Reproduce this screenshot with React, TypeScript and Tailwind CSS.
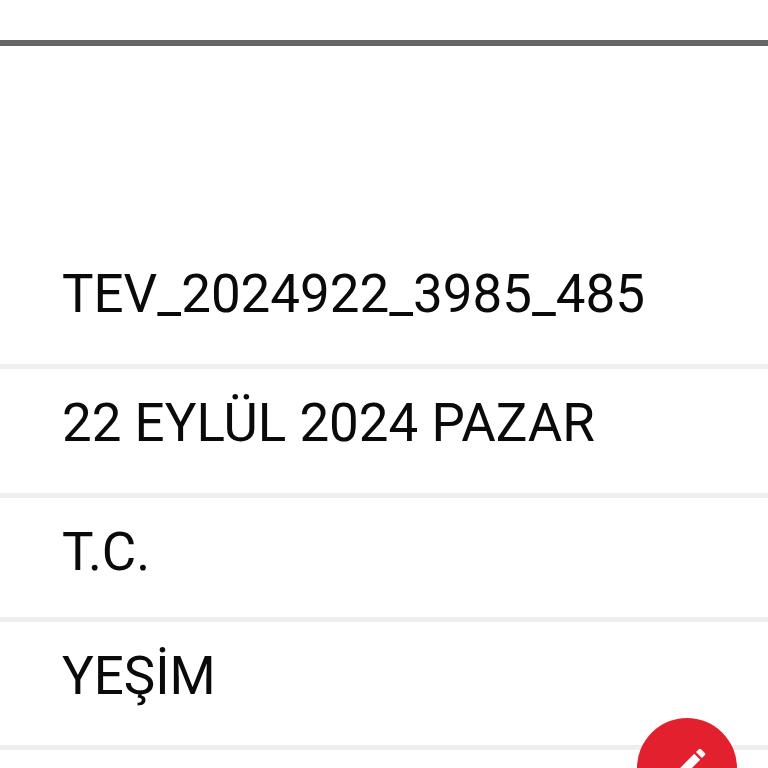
const rows = [
  { label: 'TEV_2024922_3985_485', h: 'h-[129px]' },
  { label: '22 EYLÜL 2024 PAZAR', h: 'h-[129px]' },
  { label: 'T.C.', h: 'h-[124px]' },
  { label: 'YEŞİM', h: 'h-[128px]' },
];

export default function App() {
  return (
    <div className="relative h-[768px] w-[768px] overflow-hidden bg-white font-['Roboto',sans-serif] text-[#0a0a0a]">
      <div className="h-[40px]" />
      <div className="h-[6px] bg-[#666666]" />
      <div className="h-[194px]" />
      {rows.map((row) => (
        <div
          key={row.label}
          className={`border-b-[5px] border-[#eeeeee] pl-[62px] pt-[23px] text-[52.9px] leading-[62px] ${row.h}`}
        >
          {row.label}
        </div>
      ))}
      <div className="absolute left-[637px] top-[718px] flex h-[100px] w-[100px] justify-center rounded-full bg-[#e3202e] pl-[8px] pt-[26px]">
        <svg viewBox="0 0 24 24" className="h-[38px] w-[38px]" fill="#ffffff">
          <path d="M3 17.25V21h3.75L17.81 9.94l-3.75-3.75L3 17.25zM20.71 7.04a1 1 0 0 0 0-1.41l-2.34-2.34a1 1 0 0 0-1.41 0l-1.83 1.83 3.75 3.75 1.83-1.83z" />
        </svg>
      </div>
    </div>
  );
}
